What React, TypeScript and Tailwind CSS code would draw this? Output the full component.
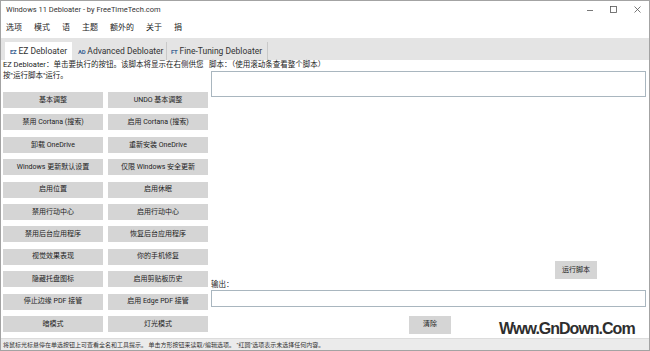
import React from 'react';

const menus = ['选项', '模式', '语', '主题', '额外的', '关于', '捐'];

const buttons = [
  ['基本调整', 'UNDO 基本调整'],
  ['禁用 Cortana (搜索)', '启用 Cortana (搜索)'],
  ['卸载 OneDrive', '重新安装 OneDrive'],
  ['Windows 更新默认设置', '仅限 Windows 安全更新'],
  ['启用位置', '启用休眠'],
  ['禁用行动中心', '启用行动中心'],
  ['禁用后台应用程序', '恢复后台应用程序'],
  ['视觉效果表现', '你的手机修复'],
  ['隐藏托盘图标', '启用剪贴板历史'],
  ['停止边缘 PDF 接管', '启用 Edge PDF 接管'],
  ['暗模式', '灯光模式'],
];

const GrayButton = ({ label, className }: { label: string; className: string }) => (
  <div className={`bg-[#d5d5d5] flex items-center justify-center whitespace-nowrap text-[7px] text-[#222] ${className}`}>
    {label}
  </div>
);

const App = () => {
  return (
    <div className="w-[650px] h-[351px] border border-[#a3a3a3] bg-white flex flex-col overflow-hidden relative font-['Roboto','Noto_Sans_CJK_SC',sans-serif] text-[#222]">
      {/* title bar */}
      <div className="h-[17px] flex items-center justify-between pl-[5px] text-[7.5px] text-[#333]">
        <span>Windows 11 Debloater - by FreeTimeTech.com</span>
        <div className="flex items-center gap-[17px] pr-[8px]">
          <svg width="6" height="6" viewBox="0 0 6 6">
            <path d="M0 3.5h6" stroke="#555" strokeWidth="0.8" />
          </svg>
          <svg width="7" height="7" viewBox="0 0 7 7">
            <rect x="0.5" y="0.5" width="6" height="6" fill="none" stroke="#555" strokeWidth="0.8" />
          </svg>
          <svg width="7" height="7" viewBox="0 0 7 7">
            <path d="M0.5 0.5l6 6M6.5 0.5l-6 6" stroke="#555" strokeWidth="0.8" />
          </svg>
        </div>
      </div>

      {/* menu bar */}
      <div className="h-[20px] flex items-center gap-[12px] pl-[5px] text-[8px] text-[#222]">
        {menus.map((m) => (
          <span key={m}>{m}</span>
        ))}
      </div>

      {/* tabs */}
      <div className="h-[22px] bg-[#e4e4e4] flex items-end pl-[4px] text-[8.5px] text-[#333] whitespace-nowrap">
        <div className="w-[67px] shrink-0 h-[18px] bg-white flex items-center pl-[5px] gap-[2px]">
          <span className="text-[6px] font-bold tracking-[-0.3px] text-[#3d6594]">EZ</span>
          <span>EZ Debloater</span>
        </div>
        <div className="w-[95px] shrink-0 h-[18px] flex items-center pl-[6px] gap-[2px] border-r border-[#c9c9c9]">
          <span className="text-[6px] font-bold tracking-[-0.3px] text-[#3d6594]">AD</span>
          <span>Advanced Debloater</span>
        </div>
        <div className="w-[101px] shrink-0 h-[18px] flex items-center pl-[4px] gap-[2px] border-r border-[#c9c9c9]">
          <span className="text-[6px] font-bold tracking-[-0.3px] text-[#3d6594]">FT</span>
          <span>Fine-Tuning Debloater</span>
        </div>
      </div>

      {/* content */}
      <div className="flex-1 flex">
        <div className="w-[208px] pl-[2px]">
          <p className="text-[7.5px] leading-[11px] -mt-[1.5px] whitespace-nowrap">
            EZ Debloater：单击要执行的按钮。该脚本将显示在右侧供您
          </p>
          <p className="text-[7.5px] leading-[11px]">按"运行脚本"运行。</p>
          <div className="mt-[11.5px] grid grid-cols-[100px_100px] gap-x-[5px] gap-y-[6.4px]">
            {buttons.map(([a, b]) => (
              <React.Fragment key={a}>
                <GrayButton label={a} className="h-[16px]" />
                <GrayButton label={b} className="h-[16px]" />
              </React.Fragment>
            ))}
          </div>
        </div>

        <div className="flex-1 flex flex-col">
          <p className="text-[7.5px] leading-[11px] -mt-[1.5px]">脚本：（使用滚动条查看整个脚本）</p>
          <div className="ml-[2px] mr-[3px] mt-[1.5px] h-[26px] border border-[#a9b6bf] bg-white" />
          <GrayButton label="运行脚本" className="ml-[346px] mt-[164px] w-[42px] h-[18px]" />
          <p className="text-[7.5px] leading-[11px] mt-[-0.5px] pl-[2px]">输出：</p>
          <div className="ml-[2px] mr-[3px] h-[17px] border border-[#a9b6bf] bg-white" />
          <GrayButton label="清除" className="ml-[200px] mt-[9px] w-[42px] h-[18px]" />
        </div>
      </div>

      {/* status bar */}
      <div className="h-[12px] bg-[#ebebeb] border-t border-[#dcdcdc] flex items-center pl-[2px] text-[6px] text-[#333] whitespace-nowrap">
        将鼠标光标悬停在单选按钮上可查看全名和工具提示。 单击方形按钮来读取/编辑选项。 "红圆"选项表示未选择任何内容。
      </div>

      {/* watermark */}
      <div className="absolute left-[498px] top-[320px] text-[16px] leading-[16px] font-bold tracking-[-1px] text-[#2e2e2e] font-['Liberation_Sans',sans-serif]">
        Www.GnDown.Com
      </div>
    </div>
  );
};

export default App;
